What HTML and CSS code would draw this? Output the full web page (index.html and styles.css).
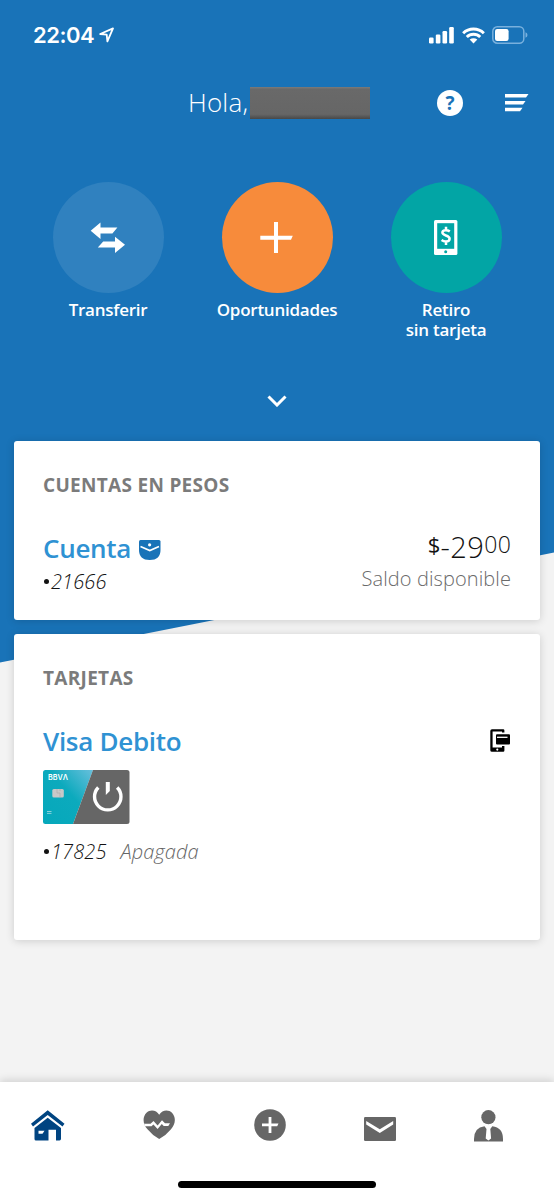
FILE: index.html
```html
<!DOCTYPE html>
<html lang="es">
<head>
<meta charset="utf-8">
<meta name="viewport" content="width=device-width">
<title>BBVA</title>
<link rel="stylesheet" href="styles.css">
</head>
<body>
<div class="app">
  <div class="status">
    <div class="clock"><span class="time">22:04</span>
      <svg class="loc" width="16" height="16" viewBox="0 0 16 16"><path d="M1.2 7 14 1.4 8.4 14.3 7.7 7.6Z" fill="none" stroke="#fff" stroke-width="1.8" stroke-linejoin="round"/></svg>
    </div>
    <div class="signals">
      <svg width="25" height="17" viewBox="0 0 25 17" fill="#fff"><rect x="0" y="10.5" width="4.6" height="6" rx="1.2"/><rect x="6.8" y="7.6" width="4.6" height="8.9" rx="1.2"/><rect x="13.5" y="4" width="4.6" height="12.5" rx="1.2"/><rect x="20.2" y="0" width="4.6" height="16.5" rx="1.2"/></svg>
      <svg width="23" height="17" viewBox="0 0 24 17" fill="none" stroke="#fff" stroke-width="3.1"><path d="M1.2 6.1A15.5 15.5 0 0 1 22.8 6.1"/><path d="M5 10.1A10 10 0 0 1 19 10.1"/><path d="M8 12.7Q12 9.8 16 12.7L12 16.8Z" fill="#fff" stroke="none"/></svg>
      <svg width="36" height="18" viewBox="0 0 36 18"><rect x=".8" y=".8" width="31" height="16.4" rx="4.5" fill="none" stroke="#78b0dd" stroke-width="1.5"/><rect x="3" y="3" width="13.6" height="12" rx="2.2" fill="#fff"/><path d="M33.5 6.3Q35.5 7 35.5 9T33.5 11.7Z" fill="#78b0dd"/></svg>
    </div>
  </div>

  <header class="header">
    <div class="greeting"><span class="hello">Hola,</span><span class="redacted"></span></div>
    <div class="help">?</div>
    <svg class="menu" width="24" height="18" viewBox="0 0 24 18" fill="#fff"><path d="M0 0H23.5L21 3.5H0Z"/><path d="M0 7H20.5L18 10.4H0Z"/><path d="M0 13.8H17.5L15 17.3H0Z"/></svg>
  </header>

  <nav class="actions">
    <div class="action">
      <div class="circle transfer"><svg width="36" height="32" viewBox="0 0 36 32" fill="#fff"><path d="M.7 8.7 10.5 .6V5.4H27.4L22.4 11.4H10.5V17Z"/><path d="M35 22.8 25 14.8V19.4H13.2L7.8 25.6H25V31Z"/></svg></div>
      <span class="label">Transferir</span>
    </div>
    <div class="action">
      <div class="circle plus"><svg width="34" height="32" viewBox="0 0 34 32" fill="#fff"><path d="M14 0H18V13.7H32.8L31 17.7H18V31H14V17.7H.3V13.7H14Z"/></svg></div>
      <span class="label">Oportunidades</span>
    </div>
    <div class="action">
      <div class="circle cash"><svg width="24" height="35" viewBox="0 0 24 35"><rect width="23.4" height="35" rx="1.5" fill="#fff"/><rect x="3.2" y="3.2" width="17" height="25.6" fill="#02a5a5"/><circle cx="11.7" cy="31.8" r="1.5" fill="#02a5a5"/><path d="M15.8 11.4Q14 10.2 11.8 10.2 8.4 10.2 8.4 12.6C8.4 16.2 15.6 14.8 15.6 18.8 15.6 21.6 12.3 21.6 11.8 21.6 9.5 21.6 7.6 20.1 7.6 20.1M12 6.8V10M12 21.5V25" fill="none" stroke="#fff" stroke-width="2.5"/></svg></div>
      <span class="label">Retiro<br>sin tarjeta</span>
    </div>
  </nav>

  <div class="expand"><svg width="20" height="12" viewBox="0 0 20 12"><path d="M1.5 1.5 10 10 18.5 1.5" fill="none" stroke="#fff" stroke-width="3"/></svg></div>

  <main class="cards">
    <section class="card accounts">
      <h2 class="heading">CUENTAS EN PESOS</h2>
      <div class="row">
        <div>
          <div class="name">Cuenta
            <svg class="pocket" width="22" height="20" viewBox="0 0 22 20"><path d="M1.5 0H20Q21.5 0 21.5 1.5V10Q21.5 20 10.75 20T0 10V1.5Q0 0 1.5 0Z" fill="#1973b8"/><path d="M1.5 6.4 10.8 10.6 20 6.4" fill="none" stroke="#fff" stroke-width="1.6"/><circle cx="10.6" cy="4.8" r="1.6" fill="#fff"/></svg>
          </div>
          <div class="number"><i class="dot"></i><span>21666</span></div>
        </div>
        <div class="balance">
          <div class="amount"><span class="cur">$</span><span class="int">-29</span><span class="dec">00</span></div>
          <div class="caption">Saldo disponible</div>
        </div>
      </div>
    </section>

    <section class="card debit">
      <h2 class="heading">TARJETAS</h2>
      <div class="row">
        <div class="name">Visa Debito</div>
        <svg class="digital" width="21" height="24" viewBox="0 0 21 24"><path d="M14.4 2.5V1.5Q14.4 .3 13.2 .3H2Q.3 .3 .3 2V21.3Q.3 22.8 2 22.8H13.2Q14.4 22.8 14.4 21.5V17H12V18.4H2.6V2.6H12V3.6H14.4Z"/><rect x="6" y="5.2" width="14" height="10.4" rx="1"/><path d="M7 8.3H17.5" stroke="#fff" stroke-width="1.3"/><circle cx="7.3" cy="20.6" r="1.1" fill="#fff"/></svg>
      </div>
      <svg class="plastic" width="87" height="54" viewBox="0 0 87 54">
        <defs>
          <clipPath id="edge"><rect width="86.5" height="54" rx="2.5"/></clipPath>
          <linearGradient id="teal" x1="0" y1="1" x2="1" y2="0"><stop offset="0" stop-color="#05a8bb"/><stop offset=".55" stop-color="#0caabd"/><stop offset="1" stop-color="#68bfdc"/></linearGradient>
        </defs>
        <g clip-path="url(#edge)">
          <path d="M0 0H50L30 54H0Z" fill="url(#teal)"/><path d="M50 0H87V54H30Z" fill="#666"/>
        </g>
        <text x="5" y="10" class="brand" textLength="20" lengthAdjust="spacingAndGlyphs">BBVΛ</text>
        <rect x="9.3" y="19" width="11.5" height="8.5" rx="1.5" fill="#c8c8c8"/><path d="M14 19V23H17V27.5M17 19V21" fill="none" stroke="#aaa" stroke-width=".6"/>
        <path d="M4 41.5H8.5M4 43.4H8.5" stroke="#a8dce5" stroke-width=".8"/>
        <path d="M55.3 17.5A13.2 13.2 0 1 0 74.2 17.5" fill="none" stroke="#fff" stroke-width="3.4"/><path d="M62.8 12H66.8V21L62.8 25Z" fill="#fff"/>
      </svg>
      <div class="number off"><i class="dot"></i><span>17825</span><span class="state">Apagada</span></div>
    </section>
  </main>

  <footer class="tabbar">
    <div class="tabs">
      <svg width="34" height="31" viewBox="0 0 34 31" fill="#004481"><path d="M16.7 .3 33.5 13.8 31.5 16.5 16.7 5 2 16.5 0 13.8Z"/><path d="M16.7 7.8 30 18V28.8Q30 30.5 28.5 30.5H25V19.8H17.5V30.5H5Q3.5 30.5 3.5 29V18Z"/><path d="M7.5 20.8H13.5L11.5 23.8H7.5Z" fill="#fff"/></svg>
      <svg width="33" height="30" viewBox="0 0 33 30"><path d="M16.2 4.8C13.5-.1 7-.8 3.5 2.8-1 7.4 0 14.5 4.5 19.3Q9 25 16.2 29 23.5 25 28 19.3C32.5 14.5 33.3 7.4 29 2.8 25.5-.8 19-.1 16.2 4.8Z" fill="#666"/><path d="M1 13.8H7.5L10.5 11 14.6 15.4 19 10.2 22 13.2H27L25.3 15.9H20.7L18.8 14 14.6 19 10.4 14.6 8.5 16.2H2.3Z" fill="#fff"/></svg>
      <svg width="32" height="32" viewBox="0 0 32 32"><circle cx="16" cy="16" r="15.8" fill="#666"/><path d="M14.6 8H17.4V14.5H24.5L23.2 17.3H17.4V24H14.6V17.3H8V14.5H14.6Z" fill="#fff"/></svg>
      <svg class="mail" width="32" height="24" viewBox="0 0 32 24"><rect width="32" height="24" rx="1.2" fill="#666"/><path d="M2.2 4 15.8 12.2 29.2 4V7.5L15.8 16 2.2 7.5Z" fill="#fff"/></svg>
      <svg class="person" width="29" height="32" viewBox="0 0 29 32" fill="#666"><circle cx="14.4" cy="7.2" r="7.1"/><path d="M0 31.5V29Q0 17.5 10.5 16.2L12.5 19 11.7 28.5 14.4 30.6 17.1 28.5 16.3 19 18.3 16.2Q29 17.5 29 29V31.5Z"/></svg>
    </div>
    <div class="home-indicator"></div>
  </footer>
</div>
</body>
</html>
```
FILE: styles.css
```css
* { box-sizing: border-box; }
body { margin: 0; font-family: "Open Sans", "Noto Sans", sans-serif; }
svg { display: block; flex: none; }
.app {
  width: 554px; height: 1200px; display: flex; flex-direction: column; overflow: hidden;
  background: #f3f3f3;
  position: relative; z-index: 0;
}
.app::before {
  content: ""; position: absolute; z-index: -1; inset: 0;
  background: #1973b8; clip-path: polygon(0 0, 100% 0, 100% 552.5px, 0 662.5px);
}
.status { height: 70px; display: flex; justify-content: space-between; align-items: center; padding: 0 26px 0 33px; }
.clock { display: flex; align-items: center; gap: 5px; color: #fff; }
.time { font: 600 22px/30px Inter, sans-serif; letter-spacing: -.5px; }
.signals { display: flex; align-items: center; gap: 7.5px; }
.header { height: 66px; display: flex; align-items: center; padding-left: 188px; color: #fff; }
.greeting { display: flex; align-items: center; width: 249px; }
.hello { font-size: 26px; font-weight: 300; line-height: 36px; width: 62px; white-space: nowrap; padding-bottom: 2px; letter-spacing: .2px; }
.redacted { width: 120px; height: 32px; background: linear-gradient(#7b7b7b 0, #696969 7%, #666 85%, #484848 100%); }
.help { width: 26px; height: 26px; border-radius: 50%; background: #fff; color: #1973b8; font-size: 19px; font-weight: 700; line-height: 26px; text-align: center; }
.menu { margin-left: 42px; }
.actions { display: grid; grid-template-columns: repeat(3, 169px); justify-content: center; margin-top: 46px; height: 164px; }
.action { display: flex; flex-direction: column; align-items: center; }
.circle { width: 111px; height: 111px; border-radius: 50%; display: flex; align-items: center; justify-content: center; }
.transfer { background: #3081bf; }
.plus { background: #f78b3b; }
.cash { background: #02a5a5; }
.label { margin-top: 7px; color: #fff; font-size: 17px; font-weight: 600; line-height: 20px; letter-spacing: -.25px; text-align: center; }
.expand { height: 95px; display: flex; justify-content: center; padding-top: 49px; }
.cards { display: flex; flex-direction: column; gap: 14px; padding: 0 14px; }
.card { background: #fff; border-radius: 3px; padding: 31px 29px; box-shadow: 0 1px 8px rgba(0,0,0,.16); }
.accounts { height: 179px; }
.debit { height: 306px; }
.heading { margin: 0; font-size: 19px; font-weight: 700; line-height: 26px; letter-spacing: .3px; color: #7b7b7b; }
.row { display: flex; justify-content: space-between; }
.accounts .row { margin-top: 34px; }
.name { display: flex; align-items: center; gap: 8px; height: 34px; color: #2f92d3; font-size: 26px; font-weight: 600; line-height: 32px; letter-spacing: -.3px; padding-bottom: 2px; }
.pocket { position: relative; top: 2px; }
.number { display: flex; align-items: center; height: 30px; font-size: 20px; font-weight: 300; font-style: italic; color: #121212; letter-spacing: .1px; }
.dot { width: 5px; height: 5px; border-radius: 50%; background: #121212; margin: 0 2px 0 1px; }
.balance { text-align: right; }
.amount { display: flex; justify-content: flex-end; height: 33px; color: #121212; font-weight: 300; }
.cur, .dec { font-size: 23px; line-height: 24px; }
.cur { font-weight: 400; font-size: 22px; }
.dec { letter-spacing: .2px; }
.int { font-size: 29px; line-height: 29px; letter-spacing: .5px; }
.caption { font-size: 20px; font-weight: 300; line-height: 28px; letter-spacing: .1px; color: #6a6a6a; }
.debit .row { margin-top: 34px; align-items: center; }
.digital { position: relative; top: -1px; }
.plastic { margin-top: 11px; }
.brand { font: 600 8px Inter, sans-serif; fill: #fff; }
.off { margin-top: 12px; }
.state { color: #666; margin-left: 14px; }
.tabbar { margin-top: auto; height: 118px; background: #fff; box-shadow: 0 -2px 8px rgba(0,0,0,.14); display: flex; flex-direction: column; align-items: center; justify-content: space-between; padding-bottom: 12px; }
.tabs { width: 100%; height: 86px; display: flex; align-items: center; justify-content: space-between; padding: 0 51px 0 31px; }
.mail { margin-top: 7px; }
.person { margin-top: 2px; }
.home-indicator { width: 198px; height: 7px; border-radius: 4px; background: #000; }
```
